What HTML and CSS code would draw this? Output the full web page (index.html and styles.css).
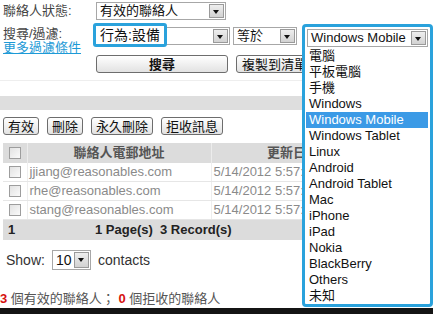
FILE: index.html
```html
<!DOCTYPE html>
<html lang="zh-Hant">
<head>
<meta charset="utf-8">
<title>聯絡人</title>
<link rel="stylesheet" href="styles.css">
</head>
<body>
<div class="page">
  <div class="filters">
    <div class="frow r1">
      <span class="lbl">聯絡人狀態:</span>
      <div class="sel w-status"><span class="val">有效的聯絡人</span><span class="arr"></span></div>
    </div>
    <div class="frow r2">
      <div class="lblcol"><span class="lbl2">搜尋/過濾:</span><a class="more" href="#">更多過濾條件</a></div>
      <div class="sel w-field"><span class="hl">行為:設備</span><span class="arr"></span></div>
      <div class="sel w-op"><span class="val">等於</span><span class="arr"></span></div>
      <div class="sel w-val"><span class="val">Windows Mobile</span><span class="arr"></span></div>
    </div>
    <div class="frow r3">
      <button class="btn btn-search">搜尋</button>
      <button class="btn btn-copy">複製到清單</button>
    </div>
  </div>
  <div class="sep"></div>
  <div class="band"></div>
  <div class="actions">
    <button class="btn">有效</button>
    <button class="btn">刪除</button>
    <button class="btn">永久刪除</button>
    <button class="btn">拒收訊息</button>
  </div>
  <table class="grid">
    <colgroup><col class="c1"><col class="c2"><col class="c3"><col class="c4"></colgroup>
    <thead>
      <tr><th><span class="cb"></span></th><th>聯絡人電郵地址</th><th>更新日期</th><th class="c4h">姓名</th></tr>
    </thead>
    <tbody>
      <tr><td><span class="cb"></span></td><td class="em">jjiang@reasonables.com</td><td class="dt">5/14/2012 5:57:12 PM</td><td class="nm">Jiang</td></tr>
      <tr><td><span class="cb"></span></td><td class="em">rhe@reasonables.com</td><td class="dt">5/14/2012 5:57:12 PM</td><td class="nm">He</td></tr>
      <tr><td><span class="cb"></span></td><td class="em">stang@reasonables.com</td><td class="dt">5/14/2012 5:57:12 PM</td><td class="nm">Tang</td></tr>
    </tbody>
    <tfoot>
      <tr><td class="pg">1</td><td class="info" colspan="3">1 Page(s)&nbsp;&nbsp;3 Record(s)</td></tr>
    </tfoot>
  </table>
  <div class="show">
    <span>Show:</span>
    <div class="sel w-num"><span class="val">10</span><span class="arr"></span></div>
    <span>contacts</span>
  </div>
  <div class="summary"><b class="num">3</b> 個有效的聯絡人； <b class="num">0</b> 個拒收的聯絡人</div>
  <div class="blackbar"></div>

  <div class="dropdown">
    <div class="sel w-dd"><span class="val">Windows Mobile</span><span class="arr"></span></div>
    <ul class="list">
      <li>電腦</li>
      <li>平板電腦</li>
      <li>手機</li>
      <li>Windows</li>
      <li class="on">Windows Mobile</li>
      <li>Windows Tablet</li>
      <li>Linux</li>
      <li>Android</li>
      <li>Android Tablet</li>
      <li>Mac</li>
      <li>iPhone</li>
      <li>iPad</li>
      <li>Nokia</li>
      <li>BlackBerry</li>
      <li>Others</li>
      <li>未知</li>
    </ul>
  </div>
</div>
</body>
</html>
```
FILE: styles.css
```css
html, body {
  margin: 0;
  padding: 0;
  background: #fff;
}
body {
  font-family: "Liberation Sans", Arial, "Noto Sans CJK TC", sans-serif;
  font-size: 13px;
  color: #222;
  overflow: hidden;
  width: 433px;
  height: 314px;
}
.page {
  position: relative;
  width: 433px;
  height: 314px;
  overflow: hidden;
}

/* filter area */
.filters {
  padding: 2px 0 0 3px;
}
.frow {
  display: flex;
  align-items: flex-start;
}
.r1 { height: 18px; }
.r2 { margin-top: 7px; height: 28px; }
.r3 { height: 18px; }
.lbl {
  width: 93px;
  line-height: 18px;
  color: #444;
}
.lblcol {
  width: 93px;
  display: flex;
  flex-direction: column;
  line-height: 14px;
}
.lbl2 { color: #444; }
.more {
  color: #1d9ad6;
  text-decoration: underline;
}

.sel {
  position: relative;
  box-sizing: border-box;
  height: 18px;
  border: 1px solid #a7a7a7;
  background: #fff;
  display: flex;
  align-items: center;
  justify-content: space-between;
  padding: 0 1px 0 3px;
  line-height: 16px;
  color: #111;
}
.arr {
  box-sizing: border-box;
  width: 15px;
  height: 14px;
  border: 1px solid #9a9a9a;
  background: linear-gradient(#eeeeee, #d2d2d2);
  position: relative;
  flex: none;
}
.arr::after {
  content: "";
  position: absolute;
  left: 3px;
  top: 5px;
  border-top: 4px solid #111;
  border-left: 3.5px solid transparent;
  border-right: 3.5px solid transparent;
}
.w-status { width: 130px; }
.w-field { width: 134px; justify-content: flex-end; }
.w-op { width: 64px; margin-left: 3px; }
.w-val { width: 124px; margin-left: 6px; }
.w-num { width: 39px; height: 20px; }
.w-num .arr { height: 16px; }
.w-dd { width: 121px; }

.hl {
  position: absolute;
  left: -4px;
  top: -5px;
  box-sizing: border-box;
  width: 74px;
  height: 24px;
  border: 3px solid #2aa2dc;
  border-radius: 3px;
  background: #fff;
  font-size: 14px;
  line-height: 18px;
  padding-left: 4px;
  color: #111;
}

.btn {
  box-sizing: border-box;
  height: 18px;
  margin: 0;
  padding: 0 4px;
  border: 1px solid #6d6d6d;
  border-radius: 3px;
  background: linear-gradient(#ffffff, #e2e2e2);
  font-family: inherit;
  font-size: 13px;
  line-height: 15px;
  color: #111;
}
.btn-search {
  margin-left: 93px;
  width: 132px;
  font-weight: bold;
}
.btn-copy {
  margin-left: 8px;
  width: 90px;
  text-align: left;
  padding-left: 5px;
}

.sep {
  margin-top: 7px;
  border-top: 1px solid #eeeeee;
}
.band {
  margin-top: 15px;
  height: 14px;
  background: #dedede;
}
.actions {
  display: flex;
  gap: 8px;
  padding: 7px 0 0 3px;
}
.actions .btn { height: 18px; }

/* grid */
.grid {
  margin: 8px 0 0 3px;
  border-collapse: collapse;
  table-layout: fixed;
  width: 430px;
}
.c1 { width: 24px; }
.c2 { width: 184px; }
.c3 { width: 164px; }
.c4 { width: 58px; }
.grid th {
  height: 20px;
  padding: 0;
  background: #dcdcdc;
  color: #555;
  font-weight: bold;
  border-left: 1px solid #ececec;
  line-height: 20px;
  white-space: nowrap;
  overflow: hidden;
}
.grid th:first-child { border-left: none; }
.grid td {
  height: 18px;
  padding: 0;
  border-bottom: 1px solid #e6e6e6;
  border-left: 1px solid #eeeeee;
  line-height: 18px;
  white-space: nowrap;
  overflow: hidden;
}
.grid td:first-child { border-left: none; text-align: center; }
.grid th:first-child { text-align: center; }
.grid td.em { padding-left: 2px; color: #8a8a8a; }
.grid td.dt { padding-left: 2px; color: #8a8a8a; }
.grid td.nm { padding-left: 2px; color: #8a8a8a; }
.grid tfoot td {
  height: 20px;
  background: #dcdcdc;
  font-weight: bold;
  color: #222;
  border: none;
  line-height: 20px;
}
.grid tfoot td.pg { text-align: left; padding-left: 5px; }
.grid tfoot td.info { padding-left: 68px; }

.cb {
  display: inline-block;
  box-sizing: border-box;
  width: 12px;
  height: 12px;
  border: 1px solid #9d9d9d;
  background: linear-gradient(135deg, #e2e2e2, #fafafa);
  vertical-align: middle;
  position: relative;
  top: -1px;
}

.show {
  margin-top: 10px;
  display: flex;
  align-items: center;
  gap: 7px;
  padding-left: 6px;
  height: 20px;
  color: #333;
  font-size: 14px;
}
.show .w-num { font-size: 14px; }

.summary {
  margin-top: 21px;
  line-height: 16px;
  color: #555;
  white-space: nowrap;
}
.num {
  color: #d6120f;
  font-weight: bold;
}
.blackbar {
  margin-top: 1px;
  height: 8px;
  background: #141414;
}

/* open dropdown */
.dropdown {
  position: absolute;
  left: 302px;
  top: 24px;
  box-sizing: border-box;
  width: 131px;
  height: 283px;
  border: 3px solid #2aa2dc;
  border-radius: 4px;
  background: #fff;
  padding: 2px 0 0 2px;
}
.list {
  list-style: none;
  margin: 1px 0 0 -1px;
  padding: 0;
  width: 122px;
}
.list li {
  height: 16px;
  line-height: 16px;
  padding-left: 3px;
  color: #111;
  white-space: nowrap;
}
.list li.on {
  background: #3b9ae6;
  color: #fff;
}
```
